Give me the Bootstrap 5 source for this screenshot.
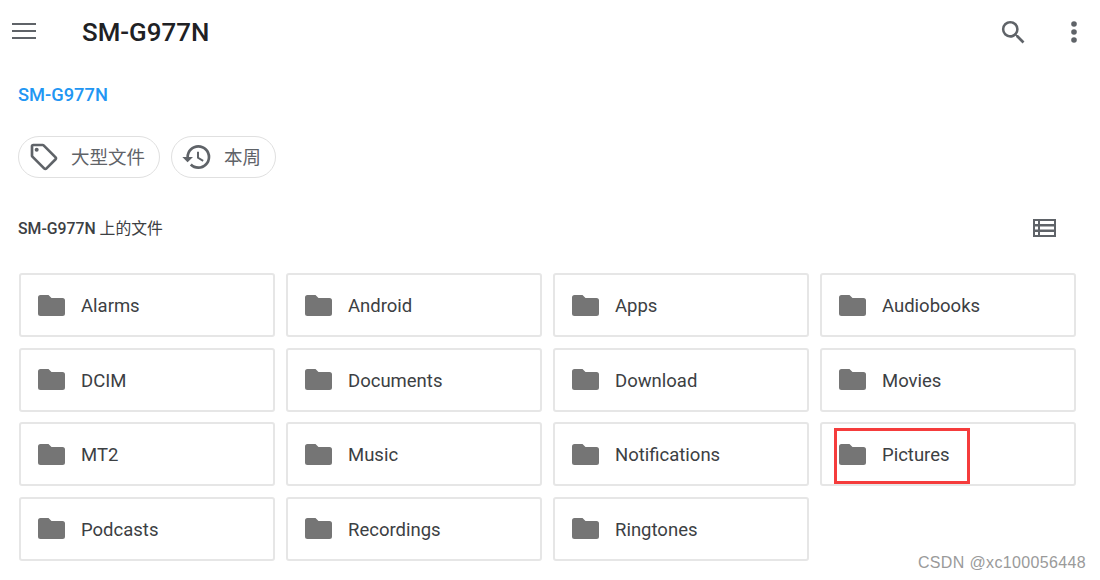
<!DOCTYPE html>
<html lang="zh">
<head>
<meta charset="utf-8">
<title>SM-G977N</title>
<link href="https://cdn.jsdelivr.net/npm/bootstrap@5.3.0/dist/css/bootstrap.min.css" rel="stylesheet">
<style>
html,body{height:580px;overflow:hidden;background:#fff}
body{font-family:Roboto,"Noto Sans CJK SC",sans-serif;color:#202124;position:relative}
.app-top{height:64px;padding:0 20px 0 11px}
.menu-ic{margin-bottom:2px}
.app-title{font-size:25.9px;font-weight:500;margin:2px 0 0 45px;line-height:1;color:#202124;flex:1}
.ic{display:block;flex:none}
.ic-grey{fill:#5f6368}
.search-ic{margin-right:39px;margin-top:1px}
.dots-ic{margin-top:-1px}
.crumb{padding:20px 18px 0;height:72px;box-sizing:border-box;margin:0}
.crumb a{font-size:18.3px;font-weight:500;color:#2196f3;text-decoration:none;line-height:20px}
.chips{padding:0 18px;gap:11px;height:42px}
.chip-item{height:42px;border:1.5px solid #e0e0e0;border-radius:21px;color:#5f6368;font-size:18.5px;padding:0 14px 0 9px;gap:11px;background:#fff}
.chip-item span{padding-top:3px}
.sec-head{padding:0 43px 0 18px;height:50px;margin-top:25px}
.sec-title{font-size:15.8px;font-weight:500;color:#3c4043;padding-top:2px}
.sec-title span{font-weight:400}
.folder-grid{display:grid;grid-template-columns:repeat(4,256px);column-gap:11px;row-gap:10.5px;padding:0 24px 0 19px;margin-top:20px}
.folder-cell{height:64px;border:2px solid #e6e6e6;border-radius:3px;padding:0 0 0 17px;gap:16px;font-size:18.5px;color:#3c4043;background:#fff}
.folder-cell svg{fill:#757575}
.folder-cell span{padding-top:4px}
.mark-box{position:absolute;left:834px;top:428px;width:136px;height:56px;border:3px solid #f53c3c}
.water{position:absolute;right:14px;top:553px;font-family:"Liberation Sans",sans-serif;font-size:16px;letter-spacing:.35px;color:#9a9a9a;line-height:20px}
</style>
</head>
<body>
<header class="app-top d-flex align-items-center">
  <svg class="ic ic-grey menu-ic" width="26" height="18" viewBox="0 0 26 18"><rect x="1" y="1" width="24" height="2"/><rect x="1" y="8" width="24" height="2"/><rect x="1" y="15" width="24" height="2"/></svg>
  <h1 class="app-title">SM-G977N</h1>
  <svg class="ic ic-grey search-ic" width="31" height="31" viewBox="0 0 24 24"><path d="M15.500 14h-.79l-.28-.27A6.470 6.470 0 0 0 16 9.500 6.500 6.500 0 1 0 9.500 16c1.610 0 3.090-.59 4.230-1.570l.27.280v.79l5 4.990L20.490 19l-4.990-5zm-6 0C7.010 14 5 11.990 5 9.500S7.010 5 9.500 5 14 7.010 14 9.500 11.990 14 9.500 14z"/></svg>
  <svg class="ic ic-grey dots-ic" width="12" height="24" viewBox="0 0 12 24"><circle cx="6" cy="4" r="2.800"/><circle cx="6" cy="12" r="2.800"/><circle cx="6" cy="20" r="2.800"/></svg>
</header>
<p class="crumb"><a href="#">SM-G977N</a></p>
<div class="chips d-flex">
  <div class="chip-item d-flex align-items-center">
    <svg class="ic ic-grey" width="32" height="32" viewBox="0 0 24 24"><path d="M21.410 11.580l-9-9A2 2 0 0 0 11 2H4a2 2 0 0 0-2 2v7c0 .55.22 1.050.59 1.420l9 9c.36.36.86.58 1.410.58s1.050-.22 1.410-.59l7-7c.37-.36.59-.86.59-1.410s-.23-1.060-.59-1.420zM13 20.010L4 11V4h7v-.01l9 9-7 7.020z"/><circle cx="6.500" cy="6.500" r="1.500"/></svg>
    <span>大型文件</span>
  </div>
  <div class="chip-item d-flex align-items-center">
    <svg class="ic ic-grey" width="32" height="32" viewBox="0 0 24 24"><path d="M13 3a9 9 0 0 0-9 9H1l3.890 3.890.07.14L9 12H6c0-3.870 3.130-7 7-7s7 3.130 7 7-3.130 7-7 7c-1.930 0-3.680-.79-4.940-2.060l-1.420 1.420A8.954 8.954 0 0 0 13 21a9 9 0 0 0 0-18zm-1 5v5l4.280 2.540.72-1.210-3.500-2.080V8H12z"/></svg>
    <span>本周</span>
  </div>
</div>
<div class="sec-head d-flex align-items-center justify-content-between">
  <div class="sec-title">SM-G977N <span>上的文件</span></div>
  <svg class="ic" width="25" height="20" viewBox="0 0 25 20"><path fill="#5f6368" fill-rule="evenodd" d="M1 1h23v18H1zM3 3v3h3V3zM8 3v3h14V3zM3 8.500v3h3v-3zM8 8.500v3h14v-3zM3 14v3h3v-3zM8 14v3h14v-3z"/></svg>
</div>
<div class="folder-grid">
  <div class="folder-cell d-flex align-items-center"><svg class="ic" width="27" height="21" viewBox="0 0 27 21"><path d="M2.500 0h8l3 3h11a2.500 2.500 0 0 1 2.500 2.500v13a2.500 2.500 0 0 1-2.500 2.500h-22A2.500 2.500 0 0 1 0 18.500v-16A2.500 2.500 0 0 1 2.500 0z"/></svg><span>Alarms</span></div>
  <div class="folder-cell d-flex align-items-center"><svg class="ic" width="27" height="21" viewBox="0 0 27 21"><path d="M2.500 0h8l3 3h11a2.500 2.500 0 0 1 2.500 2.500v13a2.500 2.500 0 0 1-2.500 2.500h-22A2.500 2.500 0 0 1 0 18.500v-16A2.500 2.500 0 0 1 2.500 0z"/></svg><span>Android</span></div>
  <div class="folder-cell d-flex align-items-center"><svg class="ic" width="27" height="21" viewBox="0 0 27 21"><path d="M2.500 0h8l3 3h11a2.500 2.500 0 0 1 2.500 2.500v13a2.500 2.500 0 0 1-2.500 2.500h-22A2.500 2.500 0 0 1 0 18.500v-16A2.500 2.500 0 0 1 2.500 0z"/></svg><span>Apps</span></div>
  <div class="folder-cell d-flex align-items-center"><svg class="ic" width="27" height="21" viewBox="0 0 27 21"><path d="M2.500 0h8l3 3h11a2.500 2.500 0 0 1 2.500 2.500v13a2.500 2.500 0 0 1-2.500 2.500h-22A2.500 2.500 0 0 1 0 18.500v-16A2.500 2.500 0 0 1 2.500 0z"/></svg><span>Audiobooks</span></div>
  <div class="folder-cell d-flex align-items-center"><svg class="ic" width="27" height="21" viewBox="0 0 27 21"><path d="M2.500 0h8l3 3h11a2.500 2.500 0 0 1 2.500 2.500v13a2.500 2.500 0 0 1-2.500 2.500h-22A2.500 2.500 0 0 1 0 18.500v-16A2.500 2.500 0 0 1 2.500 0z"/></svg><span>DCIM</span></div>
  <div class="folder-cell d-flex align-items-center"><svg class="ic" width="27" height="21" viewBox="0 0 27 21"><path d="M2.500 0h8l3 3h11a2.500 2.500 0 0 1 2.500 2.500v13a2.500 2.500 0 0 1-2.500 2.500h-22A2.500 2.500 0 0 1 0 18.500v-16A2.500 2.500 0 0 1 2.500 0z"/></svg><span>Documents</span></div>
  <div class="folder-cell d-flex align-items-center"><svg class="ic" width="27" height="21" viewBox="0 0 27 21"><path d="M2.500 0h8l3 3h11a2.500 2.500 0 0 1 2.500 2.500v13a2.500 2.500 0 0 1-2.500 2.500h-22A2.500 2.500 0 0 1 0 18.500v-16A2.500 2.500 0 0 1 2.500 0z"/></svg><span>Download</span></div>
  <div class="folder-cell d-flex align-items-center"><svg class="ic" width="27" height="21" viewBox="0 0 27 21"><path d="M2.500 0h8l3 3h11a2.500 2.500 0 0 1 2.500 2.500v13a2.500 2.500 0 0 1-2.500 2.500h-22A2.500 2.500 0 0 1 0 18.500v-16A2.500 2.500 0 0 1 2.500 0z"/></svg><span>Movies</span></div>
  <div class="folder-cell d-flex align-items-center"><svg class="ic" width="27" height="21" viewBox="0 0 27 21"><path d="M2.500 0h8l3 3h11a2.500 2.500 0 0 1 2.500 2.500v13a2.500 2.500 0 0 1-2.500 2.500h-22A2.500 2.500 0 0 1 0 18.500v-16A2.500 2.500 0 0 1 2.500 0z"/></svg><span>MT2</span></div>
  <div class="folder-cell d-flex align-items-center"><svg class="ic" width="27" height="21" viewBox="0 0 27 21"><path d="M2.500 0h8l3 3h11a2.500 2.500 0 0 1 2.500 2.500v13a2.500 2.500 0 0 1-2.500 2.500h-22A2.500 2.500 0 0 1 0 18.500v-16A2.500 2.500 0 0 1 2.500 0z"/></svg><span>Music</span></div>
  <div class="folder-cell d-flex align-items-center"><svg class="ic" width="27" height="21" viewBox="0 0 27 21"><path d="M2.500 0h8l3 3h11a2.500 2.500 0 0 1 2.500 2.500v13a2.500 2.500 0 0 1-2.500 2.500h-22A2.500 2.500 0 0 1 0 18.500v-16A2.500 2.500 0 0 1 2.500 0z"/></svg><span>Notifications</span></div>
  <div class="folder-cell d-flex align-items-center"><svg class="ic" width="27" height="21" viewBox="0 0 27 21"><path d="M2.500 0h8l3 3h11a2.500 2.500 0 0 1 2.500 2.500v13a2.500 2.500 0 0 1-2.500 2.500h-22A2.500 2.500 0 0 1 0 18.500v-16A2.500 2.500 0 0 1 2.500 0z"/></svg><span>Pictures</span></div>
  <div class="folder-cell d-flex align-items-center"><svg class="ic" width="27" height="21" viewBox="0 0 27 21"><path d="M2.500 0h8l3 3h11a2.500 2.500 0 0 1 2.500 2.500v13a2.500 2.500 0 0 1-2.500 2.500h-22A2.500 2.500 0 0 1 0 18.500v-16A2.500 2.500 0 0 1 2.500 0z"/></svg><span>Podcasts</span></div>
  <div class="folder-cell d-flex align-items-center"><svg class="ic" width="27" height="21" viewBox="0 0 27 21"><path d="M2.500 0h8l3 3h11a2.500 2.500 0 0 1 2.500 2.500v13a2.500 2.500 0 0 1-2.500 2.500h-22A2.500 2.500 0 0 1 0 18.500v-16A2.500 2.500 0 0 1 2.500 0z"/></svg><span>Recordings</span></div>
  <div class="folder-cell d-flex align-items-center"><svg class="ic" width="27" height="21" viewBox="0 0 27 21"><path d="M2.500 0h8l3 3h11a2.500 2.500 0 0 1 2.500 2.500v13a2.500 2.500 0 0 1-2.500 2.500h-22A2.500 2.500 0 0 1 0 18.500v-16A2.500 2.500 0 0 1 2.500 0z"/></svg><span>Ringtones</span></div>
</div>
<div class="mark-box"></div>
<div class="water">CSDN @xc100056448</div>
<script src="https://cdn.jsdelivr.net/npm/bootstrap@5.3.0/dist/js/bootstrap.bundle.min.js"></script>
</body>
</html>
